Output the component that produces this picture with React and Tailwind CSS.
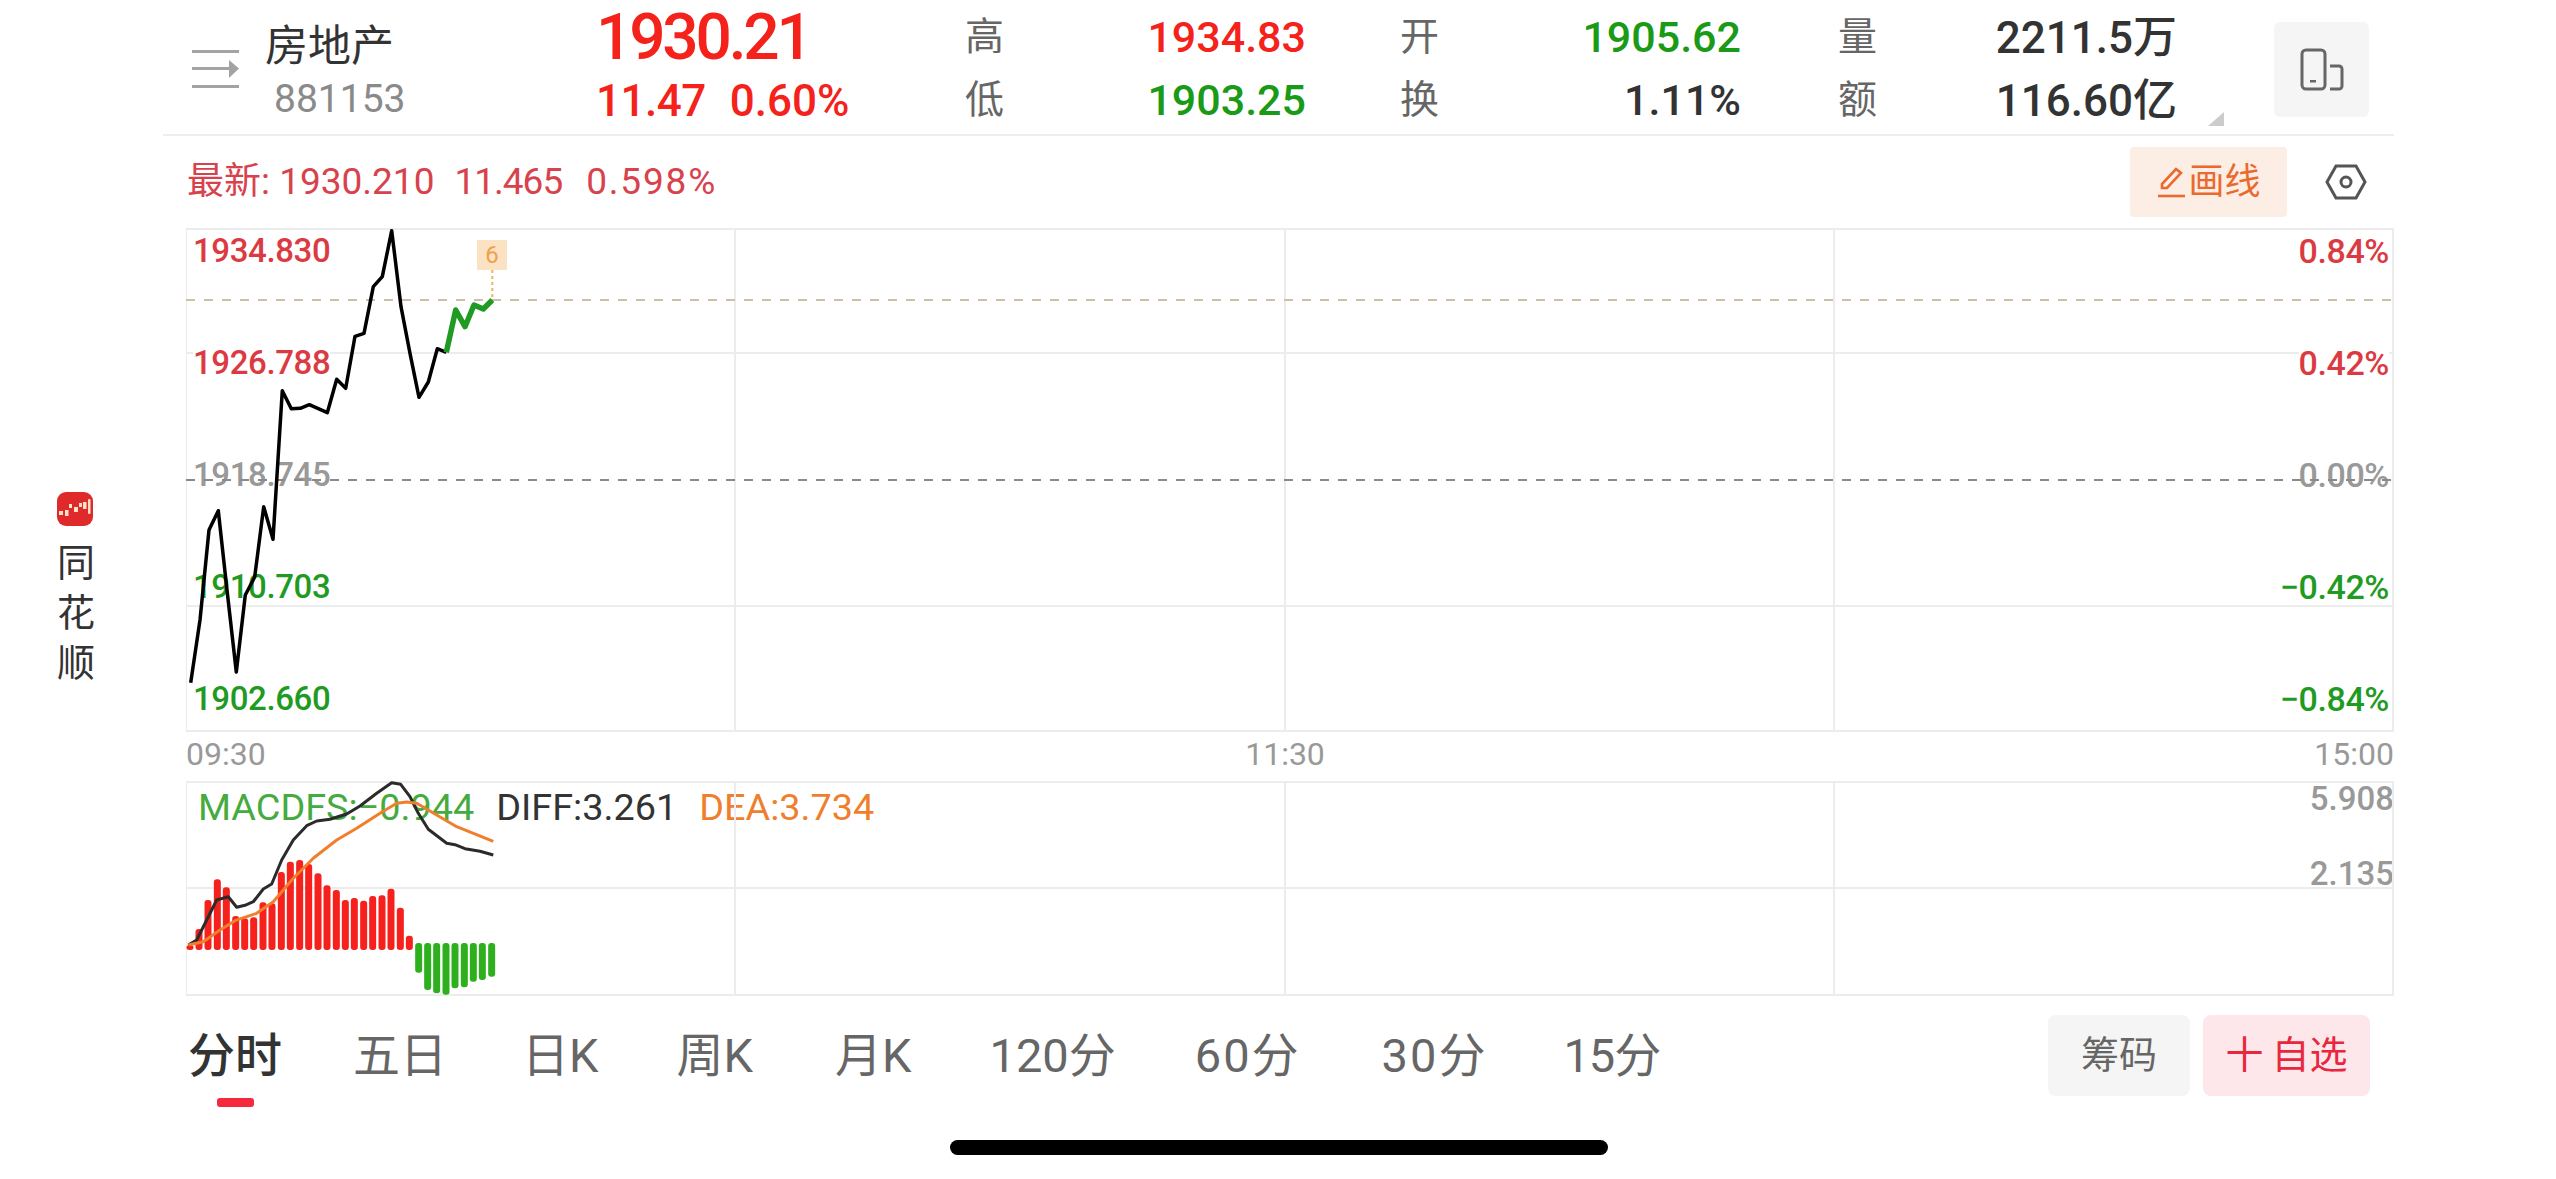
const px = (o, pts, ox = 170, oy = 760) => pts.map(([x, y]) => `${(ox + x / 3).toFixed(1)},${(oy + y / 3).toFixed(1)}`).join(" ");

const priceBlack = "190.7,682.7 200,620 209,530 218.3,510.7 227,590 236.3,672 245.3,595 254.7,577 263.7,506.7 273,539.3 282.3,390.7 291.3,408.7 300.3,408.3 309.3,404.7 318.3,408.7 327.3,412.7 336.7,379.3 345.7,388.3 355,336.3 364,333.3 373.3,286.7 382.3,276.7 391.7,230.7 401,306.7 410,353.3 419,397.3 428.3,382 437.3,348.7 446.3,352.3";
const priceGreen = "446.3,352.3 455.7,310 465,326.7 474,305 483.3,309 492.3,300";

const redBars = [[60, 555], [87, 507], [114, 420], [142, 358], [169, 382], [197, 468], [224, 475], [251, 472], [279, 427], [306, 430], [334, 336], [361, 305], [389, 300], [416, 312], [444, 340], [471, 376], [499, 390], [526, 420], [553, 414], [581, 422], [608, 408], [636, 406], [663, 386], [691, 443], [718, 527]];
const greenBars = [[746, 638], [773, 690], [800, 700], [828, 704], [855, 685], [883, 682], [910, 665], [937, 660], [965, 650]];
const diff = [[55, 555], [80, 540], [110, 480], [140, 420], [175, 410], [200, 442], [225, 436], [250, 425], [280, 387], [305, 372], [335, 300], [370, 240], [410, 197], [440, 183], [480, 178], [530, 162], [570, 138], [620, 100], [665, 68], [692, 73], [720, 110], [745, 160], [775, 208], [830, 250], [855, 254], [885, 266], [930, 274], [970, 285]];
const dea = [[55, 555], [100, 545], [150, 510], [195, 482], [260, 460], [310, 425], [370, 355], [430, 295], [500, 240], [560, 205], [630, 160], [680, 130], [710, 126], [740, 130], [800, 165], [860, 200], [970, 244]];

const axisRows = [
  ["1934.830", "0.84%", "text-[#dc3a42]", ""],
  ["1926.788", "0.42%", "text-[#dc3a42]", "bg-white"],
  ["1918.745", "0.00%", "text-[#999999]", ""],
  ["1910.703", "−0.42%", "text-[#1f9a22]", ""],
  ["1902.660", "−0.84%", "text-[#1f9a22]", ""],
];
const tabs = [
  ["五日", ""],
  ["日K", "ml-[75px]"],
  ["周K", "ml-[78px]"],
  ["月K", "ml-[82px]"],
  ["120分", "ml-[78px]"],
  ["60分", "ml-[79px] tracking-[2px]"],
  ["30分", "ml-[81px] tracking-[2px]"],
  ["15分", "ml-[76px] tracking-[-1px]"],
];

function Stat({ label, top, bottom, topColor, bottomColor, big, className }) {
  const rows = [[label[0], top, topColor], [label[1], bottom, bottomColor]];
  return (
    <div className={`flex flex-col ${className}`}>
      {rows.map(([l, v, c]) => (
        <div key={l} className="flex h-[63px] items-center justify-between">
          <span className="text-[39px] text-[#666666]">{l}</span>
          <span className={`font-medium ${big ? "text-[44px]" : "text-[43px]"} ${c}`}>{v}</span>
        </div>
      ))}
    </div>
  );
}

export default function App() {
  return (
    <div className="flex h-[1179px] w-[2556px] overflow-hidden bg-white [font-family:Roboto,'Noto_Sans_CJK_SC',sans-serif] relative">
      <aside className="flex w-[163px] shrink-0 flex-col pl-[57px] pt-[492px]">
        <svg width="36" height="34" viewBox="0 0 36 34">
          <rect width="36" height="34" rx="9" fill="#e0292b" />
          <g fill="#fbe3c8">
            <rect x="2" y="19" width="4" height="4" />
            <rect x="8" y="18" width="3.5" height="6" />
            <rect x="12" y="12" width="3" height="4" />
            <rect x="17" y="15" width="4" height="5" />
            <rect x="22" y="11" width="3" height="4" />
            <rect x="26" y="10" width="3.5" height="7" />
            <rect x="31" y="7" width="2.5" height="15" rx="1" />
          </g>
        </svg>
        <div className="mt-[12px] flex flex-col text-[38px] leading-[50px] text-[#333333]">
          <span>同</span>
          <span>花</span>
          <span>顺</span>
        </div>
      </aside>

      <main className="flex w-[2231px] shrink-0 flex-col">
        <header className="flex h-[136px] shrink-0 items-start border-b-2 border-[#eeeeee] pl-[29px] pt-[6px]">
          <svg className="mt-[44px] shrink-0" width="47" height="38" viewBox="0 0 47 38">
            <g fill="#a3a3a3">
              <rect y="0" width="47" height="3" />
              <rect y="17" width="37" height="3" />
              <rect y="35" width="47" height="3" />
              <path d="M37 10 L47 18.5 L37 28 Z" />
            </g>
          </svg>
          <div className="ml-[26px] flex w-[331px] shrink-0 flex-col">
            <span className="mt-[13px] text-[43px] leading-[54px] text-[#333333]">房地产</span>
            <span className="ml-[9px] text-[39px] leading-[52px] text-[#8a8a8a]">881153</span>
          </div>
          <div className="flex w-[369px] shrink-0 flex-col text-[#f4221b]">
            <div className="flex h-[63px] items-center text-[64px] font-medium tracking-[-3.2px]">1930.21</div>
            <div className="flex h-[63px] items-center gap-[24px] text-[44px] font-medium">
              <span className="tracking-[-0.5px]">11.47</span>
              <span>0.60%</span>
            </div>
          </div>
          <Stat className="w-[341px] shrink-0" label="高低" top="1934.83" bottom="1903.25" topColor="text-[#f4221b]" bottomColor="text-[#1a9a16]" />
          <Stat className="ml-[94px] w-[341px] shrink-0" label="开换" top="1905.62" bottom="1.11%" topColor="text-[#1a9a16]" bottomColor="text-[#333333]" />
          <Stat big className="ml-[97px] w-[339px] shrink-0" label="量额" top="2211.5万" bottom="116.60亿" topColor="text-[#333333]" bottomColor="text-[#333333]" />
          <svg className="ml-[31px] mt-[106px] shrink-0" width="16" height="14" viewBox="0 0 16 14">
            <path d="M16 0 V14 H0 Z" fill="#cccccc" />
          </svg>
          <button className="ml-[50px] mt-[16px] flex h-[95px] w-[95px] shrink-0 items-center justify-center rounded-[6px] bg-[#f5f5f5]">
            <svg width="44" height="44" viewBox="0 0 44 44" fill="none" stroke="#666666" strokeWidth="3">
              <rect x="2" y="2" width="23" height="39" rx="4" />
              <rect x="10" y="32" width="6" height="2.5" fill="#666666" stroke="none" />
              <path d="M30 18 H39 a3 3 0 0 1 3 3 V38 a3 3 0 0 1 -3 3 H30" />
            </svg>
          </button>
        </header>

        <div className="flex h-[92px] shrink-0 items-center pl-[24px] text-[37px] text-[#d8424c]">
          <span>最新: 1930.210</span>
          <span className="ml-[20px] tracking-[-1px]">11.465</span>
          <span className="ml-[24px] tracking-[1.8px]">0.598%</span>
          <button className="ml-[1413px] flex h-[70px] w-[157px] shrink-0 items-center justify-center gap-[2px] rounded-[4px] bg-[#fdeee5] text-[36px] text-[#ea6a2e]">
            <svg width="30" height="32" viewBox="0 0 30 32" fill="none" stroke="#ea6a2e" strokeWidth="2.6">
              <path d="M5 22 L5 18 L19 3 L24 7 L10 22 Z" />
              <path d="M1 30 H28" />
            </svg>
            画线
          </button>
          <svg className="ml-[38px] shrink-0" width="42" height="36" viewBox="0 0 42 36" fill="none" stroke="#555555" strokeWidth="3">
            <path d="M11 2 H31 L40 18 L31 34 H11 L2 18 Z" />
            <circle cx="21" cy="18" r="5" />
          </svg>
        </div>

        <section className="relative ml-[23px] h-[504px] w-[2208px] shrink-0">
          <svg className="absolute inset-0" width="2208" height="504" viewBox="186 228 2208 504" fill="none">
            <g stroke="#ececec" strokeWidth="2">
              <path d="M186 229 H2393 V731 H186 Z" />
              <path d="M186 353 H2393 M186 606 H2393 M735 229 V731 M1285 229 V731 M1834 229 V731" />
            </g>
          </svg>
          <div className="absolute inset-0 flex flex-col gap-[68px] pl-[7px] pr-[5px] pt-[1px]">
            {axisRows.map(([price, pct, color, bg]) => (
              <div key={price} className={`flex h-[44px] items-center justify-between text-[33px] font-medium tracking-[-0.4px] ${color}`}>
                <span className={bg}>{price}</span>
                <span className={`text-[34px] ${bg}`}>{pct}</span>
              </div>
            ))}
          </div>
          <svg className="absolute inset-0" width="2208" height="504" viewBox="186 228 2208 504" fill="none">
            <path d="M186 300 H2393" stroke="#cdbfa8" strokeWidth="2" strokeDasharray="9 9" />
            <path d="M186 480 H2393" stroke="#8a8a8a" strokeWidth="2" strokeDasharray="9 9" />
            <path d="M492.3 270 V300" stroke="#e3bb55" strokeWidth="2" strokeDasharray="3 3" />
            <polyline points={priceBlack} stroke="#000000" strokeWidth="3.5" strokeLinejoin="round" />
            <polyline points={priceGreen} stroke="#1f9a22" strokeWidth="5.5" strokeLinejoin="round" />
          </svg>
          <div className="absolute left-[291px] top-[12px] flex h-[30px] w-[30px] items-center justify-center bg-[#fbe2c3] text-[24px] text-[#f0a04b]">6</div>
        </section>

        <div className="ml-[23px] flex h-[49px] w-[2208px] shrink-0 items-center justify-between pb-[5px] text-[32px] text-[#999999]">
          <span>09:30</span>
          <span className="pr-[10px]">11:30</span>
          <span>15:00</span>
        </div>

        <section className="relative ml-[23px] h-[215px] w-[2208px] shrink-0">
          <div className="absolute left-[12px] top-[1px] flex gap-[22px] text-[37.8px] leading-[50px]">
            <span className="text-[#45ab3e]">MACDFS:−0.944</span>
            <span className="text-[#333333]">DIFF:3.261</span>
            <span className="text-[#f07f2d]">DEA:3.734</span>
          </div>
          <div className="absolute right-0 top-[1px] flex flex-col items-end gap-[31px] text-[33px] font-medium leading-[44px] text-[#999999]">
            <span className="-mt-[5px]">5.908</span>
            <span>2.135</span>
          </div>
          <svg className="absolute inset-0" width="2208" height="215" viewBox="186 781 2208 215" fill="none">
            <g stroke="#ececec" strokeWidth="2">
              <path d="M186 782 H2393 V995 H186 Z" />
              <path d="M186 888 H2393 M735 782 V995 M1285 782 V995 M1834 782 V995" />
            </g>
            {redBars.map(([x, y]) => (
              <rect key={x} x={170 + x / 3 - 3.5} y={760 + y / 3} width="7" height={950 - (760 + y / 3)} rx="3" fill="#f6211c" />
            ))}
            {greenBars.map(([x, y]) => (
              <rect key={x} x={170 + x / 3 - 3.5} y="943" width="7" height={760 + y / 3 - 943} rx="3" fill="#2eb01e" />
            ))}
            <polyline points={px(0, diff)} stroke="#2b2b2b" strokeWidth="3" strokeLinejoin="round" />
            <polyline points={px(0, dea)} stroke="#f07f2d" strokeWidth="3" strokeLinejoin="round" />
          </svg>
        </section>

        <nav className="flex flex-1 items-start pl-[25px] pt-[19px]">
          <div className="flex flex-col items-center justify-start">
            <span className="mt-[14px] text-[47px] font-medium leading-[54px] text-[#333333]">分时</span>
            <span className="mt-[15px] h-[9px] w-[37px] rounded-[3px] bg-[#f5283c]" />
          </div>
          <div className="ml-[71px] mt-[14px] flex text-[47px] leading-[54px] text-[#666666]">
            {tabs.map(([t, m]) => (
              <span key={t} className={m}>{t}</span>
            ))}
          </div>
          <div className="ml-auto mr-[24px] flex gap-[13px] text-[38px]">
            <button className="flex h-[81px] w-[142px] items-center justify-center rounded-[8px] bg-[#f5f5f5] text-[#666666]">筹码</button>
            <button className="flex h-[81px] w-[167px] items-center justify-center gap-[8px] rounded-[8px] bg-[#fde7ea] text-[#e8273f]">
              <span>十</span>
              <span>自选</span>
            </button>
          </div>
        </nav>
      </main>

      <div className="absolute bottom-[24px] left-[950px] h-[15px] w-[658px] rounded-full bg-black" />
    </div>
  );
}
